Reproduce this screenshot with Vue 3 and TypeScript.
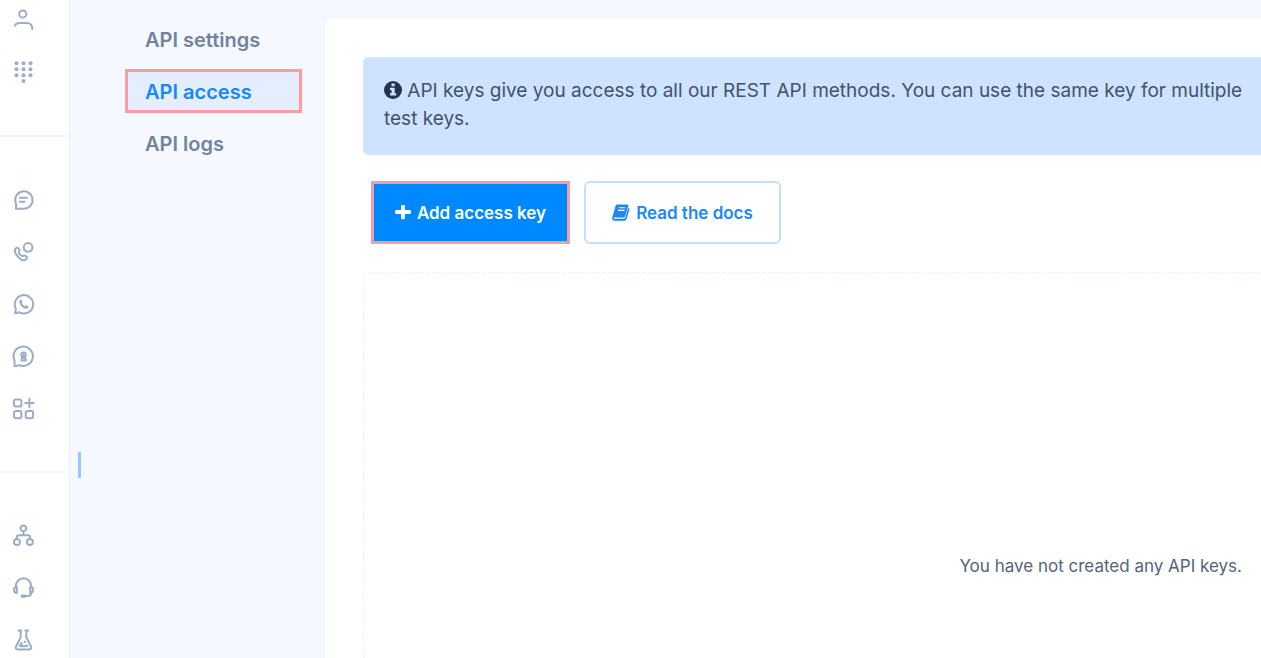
<script setup lang="ts">
interface MenuItem {
  label: string
  active: boolean
}

interface RailItem {
  name: string
  strokes: string[]
  fills?: string[]
}

const menu: MenuItem[] = [
  { label: 'API settings', active: false },
  { label: 'API access', active: true },
  { label: 'API logs', active: false },
]

const circle = (x: number, y: number, r: number): string =>
  `M${x - r} ${y}a${r} ${r} 0 1 0 ${2 * r} 0a${r} ${r} 0 1 0 ${-2 * r} 0z`

const dots: string[] = [
  ...[3.3, 9.3, 15.3].flatMap((y) => [4.5, 11.5, 18.5].map((x) => circle(x, y, 2))),
  circle(11.5, 21, 2),
]

const groups: RailItem[][] = [
  [
    { name: 'Contacts', strokes: [circle(10.8, 6, 3.6), 'M2.8 17.6C4 15 6.5 14.9 8 14.9h6.500c3.500 0 5.800 2.200 5.800 6.300'] },
    { name: 'Numbers', strokes: [], fills: dots },
  ],
  [
    { name: 'Messaging', strokes: ['M3.900 20.700l.2-4.800A8.700 8.700 0 1 1 11.900 20.700z', 'M7.800 9.700h7.200M7.800 13.700h4.800'] },
    {
      name: 'Voice',
      strokes: [
        circle(16.1, 7.4, 4.3),
        'M3.600 8.700c1.400-1.500 3-.9 3.600.7.500 1.400.2 2-.5 2.700-.3 1.300 2.700 4.200 4 4 .9-.7 1.800-1 3-.3 1.500.8 1.800 2.300.5 3.500-1.700 1.600-4.500 1-7.200-1.600-3.800-3.700-5.400-6.800-3.400-9z',
      ],
    },
    {
      name: 'WhatsApp',
      strokes: ['M3 21.300l.9-4.600a9.200 9.200 0 1 1 3.500 3.600z'],
      fills: ['M8 7.900c.8-.8 1.500-.5 1.900.3l.6 1.400c.2.600-.7 1.200-.6 1.600.5 1.200 1.500 2.200 2.700 2.700.5.200 1-.8 1.600-.6l1.800.8c.8.400.4 1.500-.2 2.100-1.400 1.300-4 .4-6.100-1.700C7.400 12.200 6.600 9.500 8 7.900z'],
    },
    {
      name: 'Verify',
      strokes: ['M2.500 22.300V16.500a9.700 9.700 0 1 1 4.800 4.600z', circle(11.6, 10.7, 2.3), 'M10.300 12.800l-.8 3.700h4.300l-.8-3.700M11.600 10.500v3.500'],
    },
    {
      name: 'Apps',
      strokes: [
        'M3.700 3.400h4a1.700 1.700 0 0 1 1.700 1.700v3.800a1.700 1.700 0 0 1-1.700 1.700h-4a1.700 1.700 0 0 1-1.700-1.700V5.100a1.700 1.700 0 0 1 1.700-1.700z',
        'M3.700 15.100h4a1.700 1.700 0 0 1 1.700 1.700v3.800a1.700 1.700 0 0 1-1.700 1.700h-4a1.700 1.700 0 0 1-1.700-1.700v-3.800a1.700 1.700 0 0 1 1.700-1.700z',
        'M15.400 15.100h4a1.700 1.700 0 0 1 1.700 1.700v3.800a1.700 1.700 0 0 1-1.700 1.700h-4a1.700 1.700 0 0 1-1.700-1.700v-3.800a1.700 1.700 0 0 1 1.700-1.700z',
        'M17.400 2.800v8.400M13.200 7h8.400',
      ],
    },
  ],
  [
    { name: 'Flows', strokes: [circle(11.4, 4.3, 2.9), circle(4.9, 18, 3), circle(17.9, 18, 3), 'M11.400 7.200v4M4.900 15v-2.300c0-1 .5-1.500 1.500-1.500h10c1 0 1.500.5 1.500 1.500V15'] },
    {
      name: 'Support',
      strokes: [
        'M3.800 10.800C3.800 5.500 7.300 2.300 11.500 2.300s7.700 3.200 7.700 8.500M19.200 16.500c0 2.300-1.200 3.500-3.300 3.500h-2.400',
        'M4.800 10.800c-1.700 0-2.800 1-2.800 3s.9 3.200 2.800 3.200zM18.200 10.800c1.700 0 2.800 1 2.800 3s-.9 3.200-2.800 3.200z',
        'M9.700 19.400h3.200v1.300H9.700z',
      ],
    },
    {
      name: 'Labs',
      strokes: [
        'M6.400 2.500h3M13.300 2.500h3M8.700 2.700v6.500L4 18.400c-.8 1.800 0 3 1.700 3h11.600c1.700 0 2.500-1.200 1.700-3l-4.700-9.200V2.700',
        'M7.500 17.500c2.500 1 5.500 1 8 0M8.500 15.300l1.500.6M12.500 13.500l.6.500',
      ],
    },
  ],
]
</script>

<template>
  <div class="page">
    <nav class="rail" aria-label="Products">
      <div v-for="(group, i) in groups" :key="i" class="rail-group">
        <a v-for="item in group" :key="item.name" class="rail-link" href="#" :aria-label="item.name">
          <svg width="24" height="24" viewBox="0 0 24 24" aria-hidden="true">
            <path v-for="d in item.strokes" :key="d" :d="d" class="line" />
            <path v-for="d in item.fills ?? []" :key="d" :d="d" class="solid" />
          </svg>
        </a>
      </div>
    </nav>

    <aside class="side">
      <span class="handle"></span>
      <nav class="menu" aria-label="API">
        <a v-for="item in menu" :key="item.label" href="#" class="menu-link" :class="{ active: item.active }">{{ item.label }}</a>
      </nav>
    </aside>

    <main class="card">
      <p class="notice">
        <svg class="info" width="18" height="18" viewBox="0 0 18 18" aria-hidden="true">
          <circle cx="9" cy="9" r="9" fill="#22344f" />
          <path d="M7.500 2.500h3.200v2.700H7.500zM6 6.700h4.700v5.600h1.500v2.200H6v-2.200h1.500V8.900H6z" fill="#cfe2ff" />
        </svg>
        API keys give you access to all our REST API methods. You can use the same key for multiple<br />test keys.
      </p>

      <div class="actions">
        <button type="button" class="btn primary">
          <svg width="16" height="16" viewBox="0 0 16 16" aria-hidden="true">
            <path d="M8 1.500v11M1.500 7h13" stroke="#fff" stroke-width="3.800" stroke-linecap="round" />
          </svg>
          Add access key
        </button>
        <button type="button" class="btn outline">
          <svg width="18" height="17" viewBox="0 0 18 17" aria-hidden="true">
            <path d="M5.300.5h9.800c1 0 1.500.7 1.200 1.600l-3.200 10c-.3 1-1 1.500-2 1.500H2.300c-.8 0-.8 1.200.2 1.200h9.200c.8 0 1.300-.3 1.500-1l3.100-9.900c1 .3 1.400 1 1.100 2l-2.900 9c-.4 1.200-1.300 1.800-2.500 1.800H2.600C.9 16.700-.3 15 .3 13.200L3.500 2.100C3.800 1.100 4.300.5 5.300.5z" fill="#1a87ff" />
            <path d="M6.800 3.800h6.500M6 6.400h6.500" stroke="#fff" stroke-width="1.100" />
          </svg>
          Read the docs
        </button>
      </div>

      <section class="empty">
        <p>You have not created any API keys.</p>
      </section>
    </main>
  </div>
</template>

<style scoped>
.page {
  display: flex;
  min-height: 100vh;
  overflow: hidden;
  background: #f5f9ff;
  font-family: Inter, "Liberation Sans", sans-serif;
  color: #42526b;
}

.rail {
  flex: 0 0 69px;
  background: #fff;
  border-right: 1px solid #e6f0ff;
}

.rail-group {
  display: flex;
  flex-direction: column;
  gap: 28px;
  padding: 51px 0 51px 12px;
  border-bottom: 2px solid #eef4ff;
}

.rail-group:first-child {
  padding-top: 8px;
}

.rail-group:last-child {
  padding-bottom: 0;
  border-bottom: 0;
}

.rail-group:nth-child(2) {
  border-bottom-color: #f4f8fe;
}

.rail-link {
  display: block;
  width: 24px;
  height: 24px;
}

.rail-link svg {
  display: block;
}

.line {
  fill: none;
  stroke: #9dadc6;
  stroke-width: 2;
  stroke-linejoin: round;
  stroke-linecap: round;
}

.solid {
  fill: #9dadc6;
}

.side {
  position: relative;
  flex: 0 0 254px;
  box-sizing: border-box;
  padding: 17px 22px 0 55px;
}

.handle {
  position: absolute;
  left: 8px;
  top: 452px;
  width: 3px;
  height: 26px;
  background: #97c6ff;
}

.menu {
  display: flex;
  flex-direction: column;
  gap: 8px;
}

.menu-link {
  box-sizing: border-box;
  height: 44px;
  padding: 0 17px;
  border: 3px solid transparent;
  font-size: 20px;
  font-weight: 600;
  line-height: 40px;
  color: #73839c;
  text-decoration: none;
}

.menu-link.active {
  background: #e5eeff;
  border-color: #fb9ca2;
  color: #1488ff;
}

.card {
  flex: 1;
  min-width: 0;
  display: flex;
  flex-direction: column;
  margin-top: 17px;
  padding: 39px 0 0 38px;
  background: #fff;
  border: solid #ebf4ff;
  border-width: 1px 0 0 1px;
  border-top-left-radius: 8px;
}

.notice {
  margin: 0;
  padding: 19px 0 21px 20px;
  background: #cfe2ff;
  border: solid #c9edf7;
  border-width: 1px 0 1px 1px;
  border-radius: 5px 0 0 5px;
  font-size: 19px;
  line-height: 28px;
  white-space: nowrap;
}

.info {
  vertical-align: -2px;
}

.actions {
  display: flex;
  gap: 14px;
  margin: 26px 0 28px 8px;
}

.btn {
  display: flex;
  align-items: center;
  justify-content: center;
  gap: 6px;
  box-sizing: border-box;
  height: 63px;
  font-family: inherit;
  font-size: 17px;
  font-weight: 600;
  white-space: nowrap;
}

.primary {
  width: 199px;
  background: #0088ff;
  border: 3px solid #f79ba4;
  color: #fff;
}

.outline {
  width: 197px;
  background: #fff;
  border: 2px solid #c5deff;
  border-radius: 6px;
  color: #1a87ff;
}

.empty {
  flex: 1;
  display: flex;
  justify-content: flex-end;
  padding: 281px 19px 0 0;
  border: dashed #eaf3fd;
  border-width: 1px 0 0 1px;
  border-top-left-radius: 4px;
}

.empty p {
  margin: 0;
  font-size: 17px;
  line-height: 24px;
  color: #566378;
}
</style>

<style>
body {
  margin: 0;
}
</style>
